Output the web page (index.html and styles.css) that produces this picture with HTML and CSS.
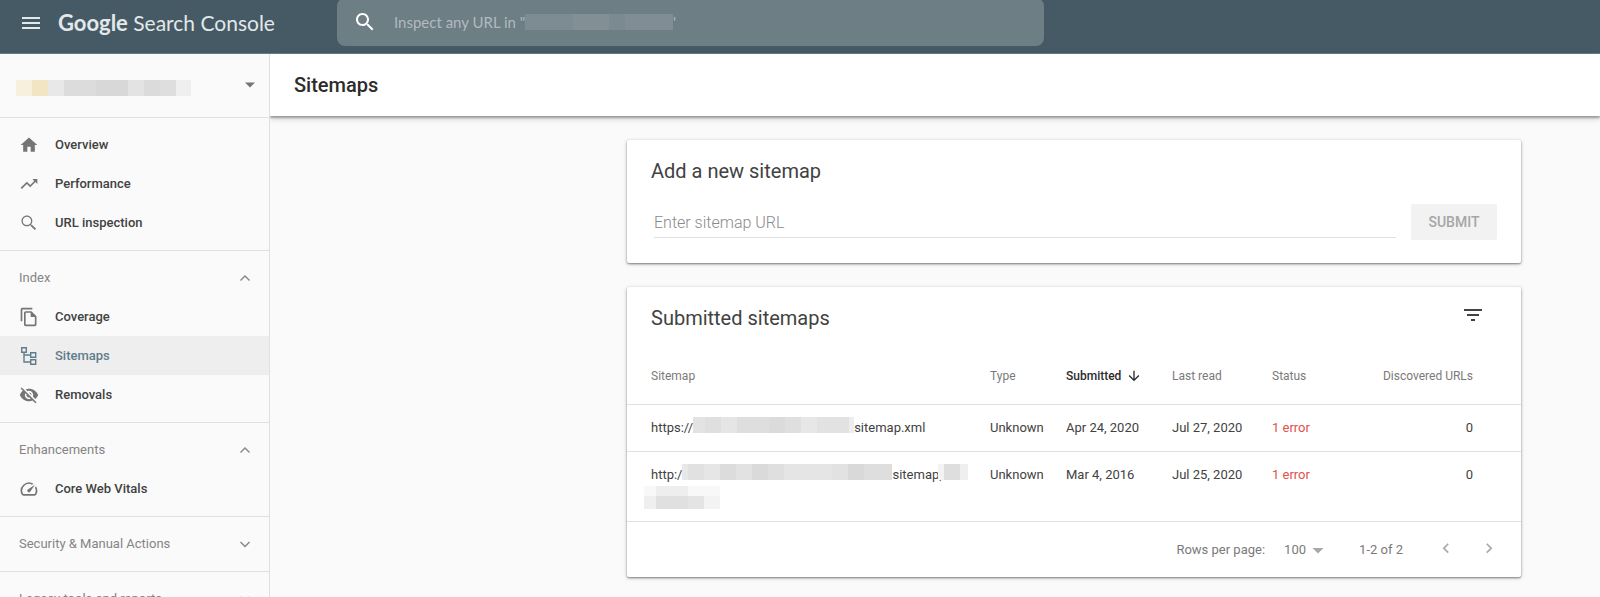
FILE: index.html
```html
<!DOCTYPE html>
<html lang="en">
<head>
  <meta charset="UTF-8">
  <meta name="viewport" content="width=device-width, initial-scale=1.0">
  <title>Sitemaps</title>
  <link rel="stylesheet" href="styles.css">
</head>
<body>
  <div class="app">
    <header class="topbar">
      <div class="brand">
        <button class="icon-button" type="button" aria-label="Main menu">
          <svg class="icon-large" viewBox="0 0 24 24"><path d="M3 18h18v-2H3v2zm0-5h18v-2H3v2zm0-7v2h18V6H3z"/></svg>
        </button>
        <a class="logo" href="#"><span class="logo-google">Google</span> Search Console</a>
      </div>
      <div class="search">
        <svg class="icon-large" viewBox="0 0 24 24"><path d="M15.5 14h-.79l-.28-.27C15.41 12.59 16 11.11 16 9.5 16 5.91 13.09 3 9.5 3S3 5.91 3 9.5 5.91 16 9.5 16c1.61 0 3.09-.59 4.23-1.57l.27.28v.79l5 4.99L20.49 19l-4.99-5zm-6 0C7.01 14 5 11.99 5 9.5S7.01 5 9.5 5 14 7.01 14 9.5 11.99 14 9.5 14z"/></svg>
        <label class="search-label">
          <input class="search-input" type="text" placeholder="Inspect any URL in &quot;" aria-label="Inspect any URL">
          <span class="mask mask-search"></span>'
        </label>
      </div>
    </header>

    <div class="main">
      <nav class="sidebar">
        <button class="property" type="button" aria-label="Select property">
          <span class="mask mask-property"></span>
          <svg class="icon" viewBox="0 0 20 20"><path d="M5 7.500h10l-5 5z"/></svg>
        </button>

        <div class="nav-section">
          <a class="nav-item" href="#">
            <svg class="icon" viewBox="0 0 24 24"><path d="M10 20v-6h4v6h5v-8h3L12 3 2 12h3v8z"/></svg>
            Overview
          </a>
          <a class="nav-item" href="#">
            <svg class="icon" viewBox="0 0 24 24"><path d="M16 6l2.290 2.290-4.880 4.880-4-4L2 16.590 3.410 18l6-6 4 4 6.300-6.290L22 12V6z"/></svg>
            Performance
          </a>
          <a class="nav-item" href="#">
            <svg class="icon" viewBox="0 0 24 24"><path d="M15.5 14h-.79l-.28-.27C15.41 12.59 16 11.11 16 9.5 16 5.910 13.090 3 9.500 3S3 5.910 3 9.500 5.910 16 9.500 16c1.610 0 3.090-.59 4.230-1.570l.27.28v.79l5 4.990L20.490 19l-4.990-5zm-6 0.500C6.700 14.500 4.500 12.300 4.500 9.500S6.700 4.500 9.500 4.500 14.500 6.700 14.500 9.500 12.300 14.500 9.500 14.500z"/></svg>
            URL inspection
          </a>
        </div>

        <div class="nav-section">
          <button class="nav-heading" type="button">
            Index
            <svg class="icon line" viewBox="0 0 20 20"><path d="M5.500 12.500l4.500-4.500 4.500 4.500"/></svg>
          </button>
          <a class="nav-item" href="#">
            <svg class="icon" viewBox="0 0 24 24"><path d="M16 1H4c-1.100 0-2 .9-2 2v14h2V3h12V1zm-1 4H8c-1.100 0-2 .9-2 2v14c0 1.100.9 2 2 2h11c1.100 0 2-.9 2-2V11l-6-6zM8 21V7h6v5h5v9H8z"/></svg>
            Coverage
          </a>
          <a class="nav-item active" href="#">
            <svg class="icon line" viewBox="0 0 20 20"><path d="M2.700 1.700h4.600v4.600H2.700zM11.700 6.700h5v4.600h-5zM11.700 13.700h5v4.600h-5zM5 6.300V16h6.700M5 9h6.700"/></svg>
            Sitemaps
          </a>
          <a class="nav-item" href="#">
            <svg class="icon" viewBox="0 0 24 24"><path d="M12 7c2.760 0 5 2.240 5 5 0 .65-.13 1.260-.36 1.830l2.920 2.920c1.510-1.260 2.700-2.890 3.430-4.750-1.730-4.390-6-7.500-11-7.500-1.400 0-2.740.25-3.980.7l2.160 2.160C10.740 7.130 11.350 7 12 7zM2 4.270l2.280 2.280.46.46C3.080 8.300 1.780 10.020 1 12c1.730 4.390 6 7.500 11 7.500 1.550 0 3.030-.3 4.380-.84l.42.42L19.730 22 21 20.730 3.270 3 2 4.270zM7.530 9.800l1.550 1.550c-.05.21-.08.43-.08.65 0 1.660 1.340 3 3 3 .22 0 .44-.03.65-.08l1.550 1.550c-.67.33-1.410.53-2.200.53-2.760 0-5-2.240-5-5 0-.79.2-1.530.53-2.200zm4.310-.78l3.150 3.150.02-.16c0-1.660-1.340-3-3-3l-.17.01z"/></svg>
            Removals
          </a>
        </div>

        <div class="nav-section">
          <button class="nav-heading" type="button">
            Enhancements
            <svg class="icon line" viewBox="0 0 20 20"><path d="M5.500 12.500l4.500-4.500 4.500 4.500"/></svg>
          </button>
          <a class="nav-item" href="#">
            <svg class="icon" viewBox="0 0 24 24"><path d="M20.380 8.570l-1.230 1.850a8 8 0 0 1-.22 7.580H5.070A8 8 0 0 1 15.580 6.850l1.850-1.230A10 10 0 0 0 3.350 19a2 2 0 0 0 1.720 1h13.850a2 2 0 0 0 1.740-1 10 10 0 0 0-.27-10.440zm-9.790 6.840a2 2 0 0 0 2.830 0l5.660-8.490-8.490 5.660a2 2 0 0 0 0 2.830z"/></svg>
            Core Web Vitals
          </a>
        </div>

        <div class="nav-section">
          <button class="nav-heading" type="button">
            Security &amp; Manual Actions
            <svg class="icon line" viewBox="0 0 20 20"><path d="M5.500 8l4.500 4.500 4.500-4.500"/></svg>
          </button>
        </div>

        <div class="nav-section">
          <button class="nav-heading" type="button">
            Legacy tools and reports
            <svg class="icon line" viewBox="0 0 20 20"><path d="M5.500 8l4.500 4.500 4.500-4.500"/></svg>
          </button>
        </div>
      </nav>

      <main class="content">
        <h1 class="page-title">Sitemaps</h1>

        <div class="cards">
          <section class="card add-card">
            <h2 class="card-title">Add a new sitemap</h2>
            <form class="add-form">
              <input class="url-input" type="text" placeholder="Enter sitemap URL" aria-label="Enter sitemap URL">
              <button class="submit" type="button" disabled>SUBMIT</button>
            </form>
          </section>

          <section class="card">
            <div class="card-header">
              <h2 class="card-title">Submitted sitemaps</h2>
              <button class="icon-button" type="button" aria-label="Filter rows">
                <svg class="icon-large" viewBox="0 0 24 24"><path d="M10 18h4v-2h-4v2zM3 6v2h18V6H3zm3 7h12v-2H6v2z"/></svg>
              </button>
            </div>
            <table class="sitemaps">
              <thead>
                <tr>
                  <th>Sitemap</th>
                  <th class="col-type">Type</th>
                  <th class="col-submitted sorted"><span class="sort">Submitted
                    <svg class="icon-small" viewBox="0 0 24 24"><path d="M20 12l-1.410-1.410L13 16.170V4h-2v12.170l-5.580-5.590L4 12l8 8 8-8z"/></svg></span></th>
                  <th class="col-read">Last read</th>
                  <th class="col-status">Status</th>
                  <th class="col-urls">Discovered URLs</th>
                </tr>
              </thead>
              <tbody>
                <tr>
                  <td><div class="url">https://<span class="mask mask-a"></span>sitemap.xml</div></td>
                  <td>Unknown</td>
                  <td>Apr 24, 2020</td>
                  <td>Jul 27, 2020</td>
                  <td class="error">1 error</td>
                  <td class="col-urls">0</td>
                </tr>
                <tr>
                  <td>
                    <div class="url">http:/<span class="mask mask-b"></span>sitemap,<span class="mask mask-c"></span></div>
                    <div class="mask mask-d"></div>
                  </td>
                  <td>Unknown</td>
                  <td>Mar 4, 2016</td>
                  <td>Jul 25, 2020</td>
                  <td class="error">1 error</td>
                  <td class="col-urls">0</td>
                </tr>
              </tbody>
            </table>
            <div class="pager">
              <label for="rows">Rows per page:</label>
              <span class="select-box">
                <select class="rows" id="rows">
                  <option>100</option>
                </select>
                <svg class="icon" viewBox="0 0 20 20"><path d="M4.500 9h11l-5.500 5.500z"/></svg>
              </span>
              <span class="range">1-2 of 2</span>
              <button class="icon-button" type="button" aria-label="Previous page">
                <svg class="icon" viewBox="0 0 24 24"><path d="M15.410 6.410L14 5l-6 6 6 6 1.410-1.410L10.830 11z"/></svg>
              </button>
              <button class="icon-button" type="button" aria-label="Next page">
                <svg class="icon" viewBox="0 0 24 24"><path d="M10 5L8.590 6.410 13.170 11l-4.580 4.590L10 17l6-6z"/></svg>
              </button>
            </div>
          </section>
        </div>
      </main>
    </div>
  </div>
</body>
</html>
```
FILE: styles.css
```css
* {
  box-sizing: border-box;
}

body {
  margin: 0;
  font-family: Roboto, "Liberation Sans", sans-serif;
  font-size: 13px;
  color: #424242;
  background-color: #fafafa;
}

button, input, select {
  font-family: inherit;
  color: inherit;
  border: none;
  background: none;
  padding: 0;
  margin: 0;
}

button {
  cursor: pointer;
}

a {
  color: inherit;
  text-decoration: none;
}

svg {
  display: block;
  flex-shrink: 0;
  fill: currentColor;
}

.icon-small {
  width: 16px;
  height: 16px;
}

.icon {
  width: 20px;
  height: 20px;
}

.icon-large {
  width: 24px;
  height: 24px;
}

.line {
  fill: none;
  stroke: currentColor;
  stroke-width: 1.4;
}

.app {
  display: flex;
  flex-direction: column;
  height: 100vh;
  overflow: hidden;
}

/* top bar */
.topbar {
  display: flex;
  flex-shrink: 0;
  align-items: flex-start;
  height: 54px;
  background-color: #455a64;
  border-bottom: 1px solid #607d8b;
}

.brand {
  display: flex;
  align-items: center;
  gap: 15px;
  width: 337px;
  height: 45px;
  padding-left: 19px;
  color: #e3e8ea;
}

.logo {
  font-family: Lato, sans-serif;
  font-size: 21px;
}

.logo-google {
  font-size: 22px;
  font-weight: bold;
}

.search {
  display: flex;
  align-items: center;
  gap: 17px;
  width: 707px;
  height: 48px;
  margin-top: -2px;
  padding-left: 16px;
  border-radius: 8px;
  background-color: #6d7e85;
  color: #fff;
}

.search-label {
  display: flex;
  align-items: center;
  font-family: Lato, sans-serif;
  font-size: 15px;
  color: #b0babf;
}

.search-input {
  width: 131px;
  font-size: 15px;
}

.search-input::placeholder {
  color: #b0babf;
}

.main {
  display: flex;
  flex: 1;
  min-height: 0;
}

/* sidebar */
.sidebar {
  position: relative;
  z-index: 1;
  flex-shrink: 0;
  width: 270px;
  overflow: hidden;
  background-color: #fafafa;
  border-right: 1px solid #e0e0e0;
}

.property {
  display: flex;
  align-items: center;
  justify-content: space-between;
  width: 100%;
  height: 64px;
  padding: 0 9px 2px 16px;
  border-bottom: 1px solid #e0e0e0;
  color: #757575;
}

.nav-section {
  padding: 7px 0 8px;
  border-bottom: 1px solid #e0e0e0;
}

.nav-item {
  display: flex;
  align-items: center;
  gap: 16px;
  height: 39px;
  padding-left: 19px;
  font-weight: 500;
}

.nav-item .icon {
  color: #757575;
}

.nav-item.active,
.nav-item.active .icon {
  background-color: #eee;
  color: #607d8b;
}

.nav-heading {
  display: flex;
  align-items: center;
  justify-content: space-between;
  width: 100%;
  height: 39px;
  padding: 0 14px 0 19px;
  font-size: 13px;
  color: #858585;
}

/* content */
.content {
  flex: 1;
  min-width: 0;
}

.page-title {
  margin: 0;
  height: 62px;
  padding-left: 24px;
  line-height: 62px;
  font-size: 20px;
  font-weight: 500;
  color: #2c2c2c;
  background-color: #fff;
  box-shadow: 0 2px 2px rgba(0, 0, 0, 0.3), 0 3px 6px rgba(0, 0, 0, 0.15);
}

.cards {
  display: flex;
  flex-direction: column;
  gap: 24px;
  max-width: 973px;
  margin-left: auto;
  padding: 24px 79px 20px 0;
}

.card {
  border-radius: 2px;
  background-color: #fff;
  box-shadow: 0 1px 2px rgba(0, 0, 0, 0.4), 0 1px 4px rgba(0, 0, 0, 0.2);
}

.add-card {
  padding: 19px 24px 23px;
}

.card-title {
  margin: 0;
  font-size: 20px;
  line-height: 24px;
  font-weight: 400;
}

.add-form {
  display: flex;
  align-items: center;
  gap: 15px;
  margin-top: 21px;
  padding-left: 3px;
}

.url-input {
  flex: 1;
  height: 32px;
  padding-top: 2px;
  font-size: 16px;
  border-bottom: 1px solid #e0e0e0;
}

.url-input::placeholder {
  font-weight: 300;
  color: #8a8a8a;
}

.submit {
  width: 86px;
  height: 36px;
  border-radius: 2px;
  background-color: #f2f2f2;
  color: #a6a6a6;
  font-size: 14px;
  font-weight: 500;
}

.card-header {
  display: flex;
  align-items: flex-start;
  justify-content: space-between;
  padding: 16px 36px 0 24px;
}

.card-header .card-title {
  line-height: 30px;
}

/* table */
.sitemaps {
  width: 100%;
  table-layout: fixed;
  border-collapse: collapse;
}

.sitemaps th,
.sitemaps td {
  padding: 0 0 0 24px;
  text-align: left;
  border-bottom: 1px solid #e0e0e0;
}

.sitemaps th {
  height: 71px;
  padding-top: 16px;
  font-size: 12px;
  font-weight: 400;
  color: #7a7a7a;
}

.sitemaps td {
  padding-top: 12px;
  padding-bottom: 12px;
  line-height: 22px;
  vertical-align: top;
  white-space: nowrap;
}

.sitemaps th.sorted {
  font-weight: 500;
  color: #2c2c2c;
}

.sort {
  display: flex;
  align-items: center;
  gap: 5px;
}

.col-type {
  width: 76px;
}

.col-submitted {
  width: 106px;
}

.col-read {
  width: 100px;
}

.col-status {
  width: 88px;
}

th.col-urls {
  width: 185px;
}

.sitemaps .col-urls {
  padding-right: 48px;
  text-align: right;
}

.sitemaps .error {
  color: #e2504b;
}

.url {
  display: flex;
}

/* pixelated blocks that hide the site's address */
.mask {
  display: block;
  flex-shrink: 0;
  height: 16px;
}

.mask-search {
  width: 148px;
  background: linear-gradient(90deg, #7d8b92 0 48px, #829096 48px 84px, #7b8990 84px 100px, #808d94 100px);
}

.mask-property {
  width: 175px;
  margin-top: 6px;
  background: linear-gradient(90deg, #f6f0dc 0 16px, #f1e5c3 16px 32px, #e8e8e8 32px 48px, #dcdcdc 48px 80px, #d8d8d8 80px 112px, #e3e3e3 112px 128px, #dbdbdb 128px 144px, #dedede 144px 160px, #efefef 160px);
}

.mask-a {
  width: 161px;
  background: linear-gradient(90deg, #e3e3e3 0 12px, #dfdfdf 12px 28px, #e5e5e5 28px 44px, #dedede 44px 76px, #dbdbdb 76px 92px, #dfdfdf 92px 108px, #e7e7e7 108px 124px, #e2e2e2 124px 156px, #ededed 156px);
}

.mask-b {
  width: 210px;
  background: linear-gradient(90deg, #e8e8e8 0 6px, #e1e1e1 6px 22px, #e6e6e6 22px 38px, #dcdcdc 38px 54px, #e2e2e2 54px 70px, #dadada 70px 86px, #dfdfdf 86px 102px, #e5e5e5 102px 150px, #e2e2e2 150px 166px, #d9d9d9 166px 182px, #dedede 182px);
}

.mask-c {
  width: 30px;
  margin-left: -4px;
  background: linear-gradient(90deg, #f3f3f3 0 6px, #dedede 6px 22px, #efefef 22px);
}

.mask-d {
  width: 76px;
  height: 23px;
  margin-left: -7px;
  background:
    linear-gradient(90deg, #f8f8f8 0 12px, #eee 12px 44px, #f8f8f8 44px) top / 100% 10px no-repeat,
    linear-gradient(90deg, #efefef 0 12px, #e0e0e0 12px 44px, #e4e4e4 44px 60px, #f3f3f3 60px);
}

/* pager */
.pager {
  display: flex;
  align-items: center;
  justify-content: flex-end;
  gap: 23px;
  height: 55px;
  padding-right: 22px;
  color: #7a7a7a;
}

.pager label {
  margin-right: -4px;
}

.pager .icon {
  color: #a8a8a8;
}

.select-box {
  display: grid;
  align-items: center;
  justify-items: end;
  width: 44px;
}

.select-box > * {
  grid-area: 1 / 1;
}

.select-box .icon {
  pointer-events: none;
}

.rows {
  width: 100%;
  appearance: none;
  font-size: 13px;
}

.range {
  margin: 0 10px 0 8px;
}
```
